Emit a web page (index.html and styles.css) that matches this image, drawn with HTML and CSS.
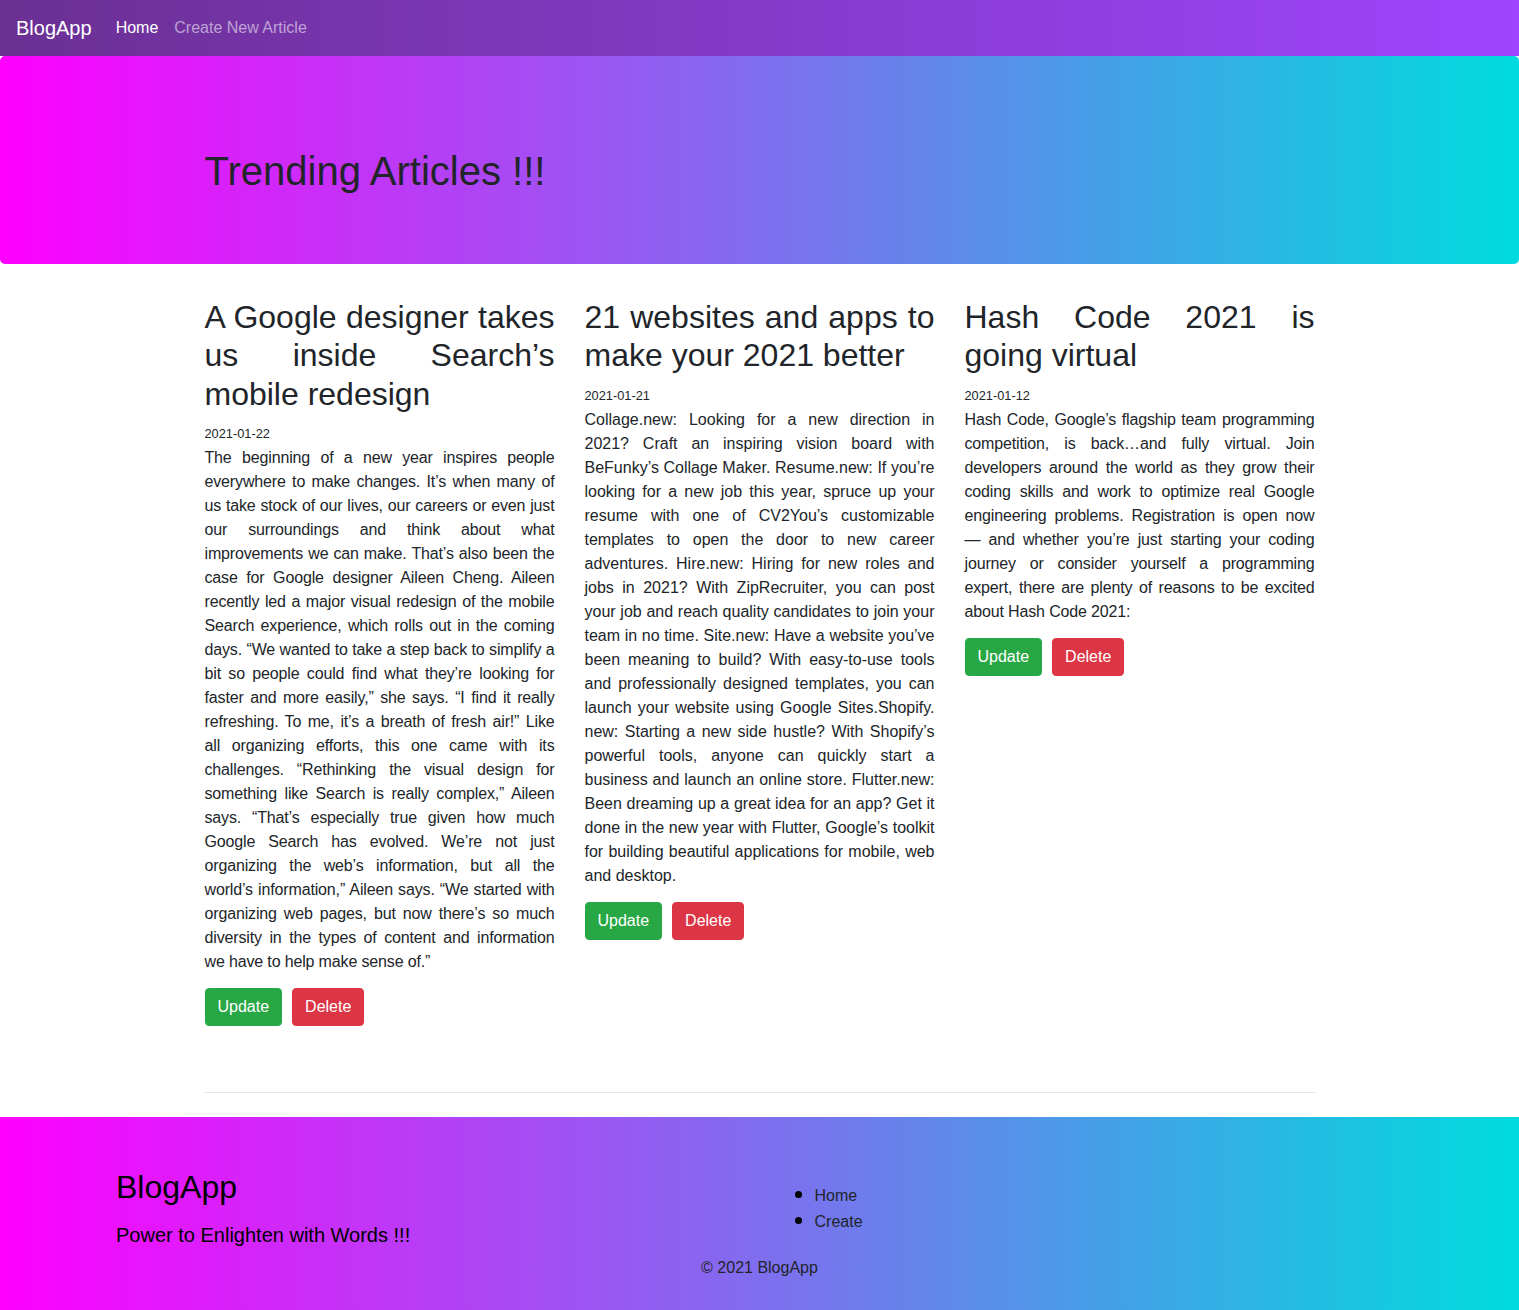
FILE: index.html
```html
<!DOCTYPE html>
<html lang="en">
<head>
<meta charset="utf-8">
<title>BlogApp</title>
<link rel="stylesheet" href="styles.css">
</head>
<body>
<nav class="navbar">
  <a class="brand" href="#">BlogApp</a>
  <ul class="nav">
    <li><a class="nav-link active" href="#">Home</a></li>
    <li><a class="nav-link" href="#">Create New Article</a></li>
  </ul>
</nav>

<header class="hero">
  <div class="container">
    <h1 class="hero-title">Trending Articles !!!</h1>
  </div>
</header>

<main class="container">
  <div class="row">
    <article class="article">
      <h2 class="article-title">A Google designer takes us inside Search’s mobile redesign</h2>
      <div class="article-date"><small>2021-01-22</small></div>
      <p class="article-text">The beginning of a new year inspires people everywhere to make changes. It’s when many of us take stock of our lives, our careers or even just our surroundings and think about what improvements we can make. That’s also been the case for Google designer Aileen Cheng. Aileen recently led a major visual redesign of the mobile Search experience, which rolls out in the coming days. “We wanted to take a step back to simplify a bit so people could find what they’re looking for faster and more easily,” she says. “I find it really refreshing. To me, it’s a breath of fresh air!” Like all organizing efforts, this one came with its challenges. “Rethinking the visual design for something like Search is really complex,” Aileen says. “That’s especially true given how much Google Search has evolved. We’re not just organizing the web’s information, but all the world’s information,” Aileen says. “We started with organizing web pages, but now there’s so much diversity in the types of content and information we have to help make sense of.”</p>
      <div class="actions">
        <a class="btn btn-success" href="#">Update</a>
        <a class="btn btn-danger" href="#">Delete</a>
      </div>
    </article>
    <article class="article">
      <h2 class="article-title">21 websites and apps to make your 2021 better</h2>
      <div class="article-date"><small>2021-01-21</small></div>
      <p class="article-text article-text--loose">Collage.new: Looking for a new direction in 2021? Craft an inspiring vision board with BeFunky’s Collage Maker. Resume.new: If you’re looking for a new job this year, spruce up your resume with one of CV2You’s customizable templates to open the door to new career adventures. Hire.new: Hiring for new roles and jobs in 2021? With ZipRecruiter, you can post your job and reach quality candidates to join your team in no time. Site.new: Have a website you’ve been meaning to build? With easy-to-use tools and professionally designed templates, you can launch your website using Google Sites.Shopify. new: Starting a new side hustle? With Shopify’s powerful tools, anyone can quickly start a business and launch an online store. Flutter.new: Been dreaming up a great idea for an app? Get it done in the new year with Flutter, Google’s toolkit for building beautiful applications for mobile, web and desktop.</p>
      <div class="actions">
        <a class="btn btn-success" href="#">Update</a>
        <a class="btn btn-danger" href="#">Delete</a>
      </div>
    </article>
    <article class="article">
      <h2 class="article-title">Hash Code 2021 is going virtual</h2>
      <div class="article-date"><small>2021-01-12</small></div>
      <p class="article-text">Hash Code, Google’s flagship team programming competition, is back…and fully virtual. Join developers around the world as they grow their coding skills and work to optimize real Google engineering problems. Registration is open now — and whether you’re just starting your coding journey or consider yourself a programming expert, there are plenty of reasons to be excited about Hash Code 2021:</p>
      <div class="actions">
        <a class="btn btn-success" href="#">Update</a>
        <a class="btn btn-danger" href="#">Delete</a>
      </div>
    </article>
  </div>
  <hr class="divider">
</main>

<footer class="footer">
  <div class="footer-row">
    <div class="footer-brand">
      <h2 class="footer-title">BlogApp</h2>
      <p class="footer-lead">Power to Enlighten with Words !!!</p>
    </div>
    <div class="footer-links">
      <ul class="footer-list">
        <li><a href="#">Home</a></li>
        <li><a href="#">Create</a></li>
      </ul>
    </div>
  </div>
  <div class="copyright">© 2021 BlogApp</div>
</footer>
</body>
</html>
```

FILE: styles.css
```css
* { box-sizing: border-box; }

body {
  margin: 0;
  font-family: "Liberation Sans", Arial, sans-serif;
  font-size: 16px;
  line-height: 1.5;
  color: #212529;
  background: #fff;
}

a { text-decoration: none; }

.navbar {
  display: flex;
  align-items: center;
  padding: 8px 16px;
  background: linear-gradient(to right, #6a3093, #a044ff);
}

.brand {
  font-size: 20px;
  line-height: 30px;
  padding: 5px 0;
  margin-right: 16px;
  color: #fff;
}

.nav {
  display: flex;
  list-style: none;
  margin: 0;
  padding: 0;
}

.nav-link {
  display: block;
  padding: 8px;
  color: rgba(255, 255, 255, 0.55);
}

.nav-link.active { color: #fff; }

.hero {
  background: linear-gradient(90deg, #ff00ff, #00dbde);
  border-radius: 5px;
  padding: 91px 0 69px;
  margin-bottom: 34px;
}

.container {
  width: 1140px;
  margin: 0 auto;
  padding: 0 15px;
}

.hero-title {
  margin: 0;
  font-size: 40px;
  font-weight: 500;
  line-height: 48px;
  color: #212529;
}

.row {
  display: grid;
  grid-template-columns: repeat(3, 1fr);
  margin: 0 -15px;
}

.article {
  padding: 0 15px;
  text-align: justify;
}

.article-title {
  margin: 0 0 8px;
  font-size: 32px;
  font-weight: 500;
  line-height: 38.4px;
}

.article-date {
  line-height: 24px;
}

.article-date small { font-size: 12.8px; }

.article-text {
  margin: 0 0 14px;
  letter-spacing: -0.15px;
}

.article-text--loose { letter-spacing: 0; }

.actions {
  display: flex;
  gap: 10px;
}

.btn {
  display: inline-block;
  padding: 6px 12px;
  border: 1px solid transparent;
  border-radius: 4px;
  font-size: 16px;
  line-height: 24px;
  color: #fff;
}

.btn-success { background: #28a745; border-color: #28a745; }
.btn-danger { background: #dc3545; border-color: #dc3545; }

.divider {
  margin: 66px 0 24px;
  border: 0;
  border-top: 1px solid rgba(0, 0, 0, 0.1);
}

.footer {
  background: linear-gradient(90deg, #ff00ff, #00dbde);
  padding-top: 51px;
}

.footer-row {
  display: grid;
  grid-template-columns: 1fr 1fr;
}

.footer-brand {
  padding-left: 116px;
}

.footer-title {
  margin: 0 0 13px;
  font-size: 32px;
  font-weight: 500;
  line-height: 38.4px;
  color: #000;
}

.footer-lead {
  margin: 0;
  font-size: 20px;
  line-height: 30px;
  color: #000;
}

.footer-links {
  padding: 0 15px;
}

.footer-list {
  margin: 14px 0 16px;
  padding-left: 40px;
  line-height: 24px;
}

.footer-list li::marker { color: #000; font-size: 22px; }

.footer-list a { color: #212529; }

.copyright {
  text-align: center;
  padding: 6px 0 32px;
  color: #212529;
}
```
